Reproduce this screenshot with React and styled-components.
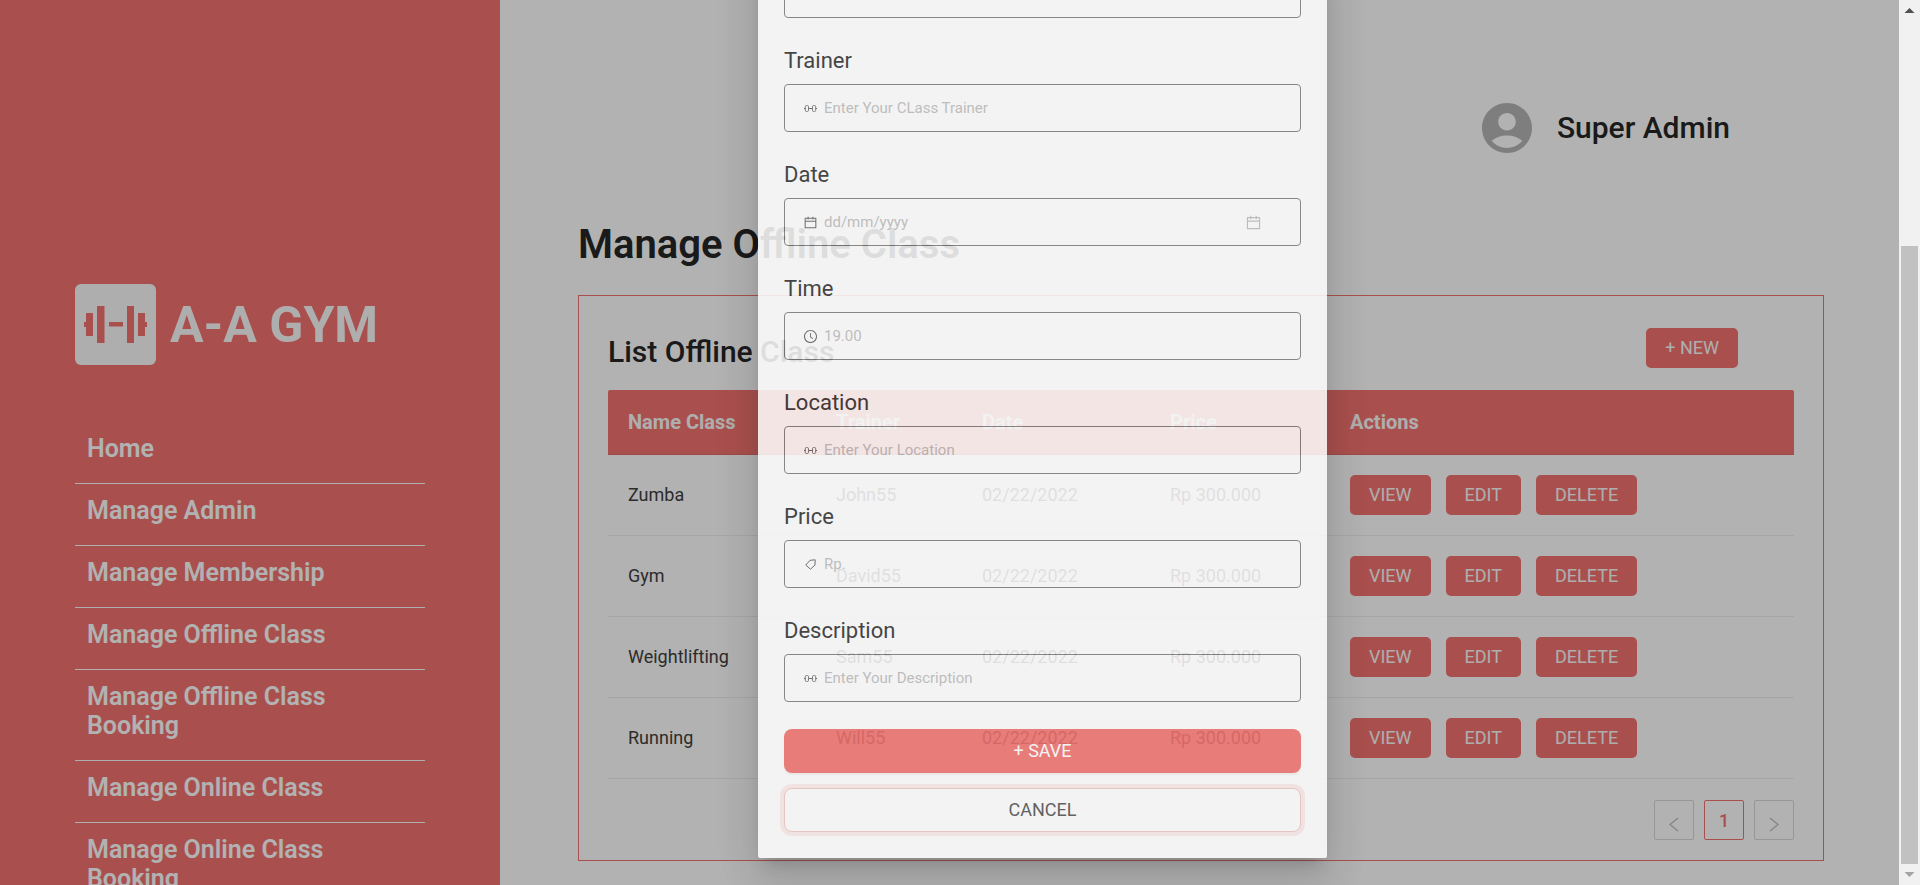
import React from "react";
import styled, { createGlobalStyle } from "styled-components";
import { MdAccountCircle } from "react-icons/md";
import { AiOutlineCalendar, AiOutlineClockCircle } from "react-icons/ai";

const red = "#f27370";

const GlobalStyle = createGlobalStyle`
  *, *::before, *::after { box-sizing: border-box; }
  body { margin: 0; background: #fff; color: #262626; font-family: Roboto, "Liberation Sans", sans-serif; }
  h1, h2, p, ul { margin: 0; padding: 0; }
  button, input { font-family: inherit; }
`;

const Screen = styled.div`
  display: flex;
  height: 100vh;
  overflow: hidden;
`;

const Page = styled.div`
  position: relative;
  display: flex;
  flex: 1;
  min-width: 0;
  overflow: hidden;
`;

const Sidebar = styled.aside`
  flex: 0 0 500px;
  padding: 284px 75px 0;
  background: ${red};
  color: #fff;
`;

const Brand = styled.div`
  display: flex;
  align-items: center;
  gap: 14px;
  margin-bottom: 57px;
  color: #fafafa;
  font-size: 50px;
  font-weight: 700;
  line-height: 58px;
`;

const BrandIcon = styled.svg`
  width: 81px;
  height: 81px;
  border-radius: 6px;
  background: #fafafa;
  fill: ${red};
`;

const NavList = styled.ul`
  list-style: none;
`;

const NavItem = styled.li`
  border-bottom: 1px solid #fafafa;
`;

const NavLink = styled.a`
  display: block;
  padding: 12px 12px 20px;
  color: #fff;
  font-size: 25px;
  font-weight: 600;
  line-height: 29px;
  text-decoration: none;
`;

const Main = styled.main`
  flex: 1;
  min-width: 0;
  padding: 98px 75px 0 78px;
`;

const UserBar = styled.header`
  display: flex;
  align-items: center;
  justify-content: flex-end;
  gap: 20px;
  margin-bottom: 63px;
  padding-right: 94px;
  font-size: 30px;
  font-weight: 500;
  line-height: 36px;

  svg { color: #b5b5b5; }
`;

const PageTitle = styled.h1`
  margin-bottom: 26px;
  font-size: 40px;
  font-weight: 600;
  line-height: 48px;
`;

const Card = styled.section`
  padding: 32px 29px 20px;
  border: 1px solid ${red};
`;

const CardHead = styled.div`
  display: flex;
  align-items: flex-end;
  justify-content: space-between;
  margin-bottom: 22px;
  padding-right: 56px;
`;

const CardTitle = styled.h2`
  font-size: 30px;
  font-weight: 500;
  line-height: 32px;
`;

const Button = styled.button`
  height: 40px;
  padding: 0 19px;
  border: 0;
  border-radius: 5px;
  background: ${red};
  color: #fafafa;
  font-size: 18px;
  line-height: 24px;
`;

const Table = styled.table`
  width: 100%;
  table-layout: fixed;
  border-collapse: separate;
  border-spacing: 0;
  font-size: 18px;
  line-height: 24px;
`;

const Col = styled.col`
  width: ${(p) => p.$width};
`;

const HeadCell = styled.th`
  height: 65px;
  padding: 0 20px;
  border-bottom: 1px solid #e46a67;
  background: ${red};
  color: #fafafa;
  font-size: 20px;
  font-weight: 700;
  text-align: left;

  &:first-child { border-top-left-radius: 2px; }
  &:last-child { border-top-right-radius: 2px; }
`;

const Cell = styled.td`
  height: 81px;
  padding: 0 20px;
  border-bottom: 1px solid #eee;
  color: #404040;
`;

const Actions = styled.div`
  display: flex;
  gap: 15px;
`;

const Pagination = styled.nav`
  display: flex;
  justify-content: flex-end;
  gap: 10px;
  margin-top: 21px;
`;

const PageButton = styled.button`
  display: flex;
  align-items: center;
  justify-content: center;
  width: 40px;
  height: 40px;
  padding: ${(p) => (p.$current ? "0" : "8px 0 0")};
  border: 1px solid ${(p) => (p.$current ? red : "#d9d9d9")};
  border-radius: 2px;
  background: transparent;
  color: ${(p) => (p.$current ? red : "#bfbfbf")};
  font-size: 18px;
  font-weight: 500;
`;

const Mask = styled.div`
  position: absolute;
  inset: 0;
  display: grid;
  grid-template-columns: 758fr 569fr 572fr;
  grid-template-rows: minmax(0, 1fr);
  align-items: end;
  padding-bottom: 27px;
  background: rgba(0, 0, 0, 0.3);
`;

const Modal = styled.div`
  grid-column: 2;
  padding: 26px;
  border-radius: 2px;
  background: #fff;
  opacity: 0.85;
  box-shadow:
    0 11px 15px -7px rgba(0, 0, 0, 0.2),
    0 24px 38px 3px rgba(0, 0, 0, 0.1),
    0 9px 46px 8px rgba(0, 0, 0, 0.06);
`;

const Form = styled.form`
  display: flex;
  flex-direction: column;
`;

const Field = styled.div`
  display: flex;
  flex-direction: column;
  gap: 10px;
  margin-bottom: ${(p) => (p.$last ? "27px" : "30px")};
`;

const Label = styled.label`
  font-size: 22px;
  line-height: 26px;
  color: #333;
`;

const InputBox = styled.div`
  display: flex;
  align-items: center;
  gap: 6px;
  height: 48px;
  padding: 0 38px 0 18px;
  border: 1px solid #808080;
  border-radius: 4px;
  color: #666;
`;

const Input = styled.input`
  flex: 1;
  min-width: 0;
  padding: 0;
  border: 0;
  outline: 0;
  background: transparent;
  font-size: 15px;
  line-height: 24px;

  &::placeholder { color: #bfbfbf; opacity: 1; }
`;

const SuffixIcon = styled.span`
  display: flex;
  color: #bfbfbf;
`;

const SaveButton = styled(Button)`
  height: 44px;
  border-radius: 8px;
  color: #fff;
  box-shadow: 0 2px 2px rgba(0, 0, 0, 0.06);
`;

const CancelButton = styled(SaveButton)`
  margin-top: 15px;
  border: 1px solid #f0c8c7;
  background: #fff;
  color: #555;
  box-shadow: 0 0 0 4px rgba(242, 115, 112, 0.14);
`;

const ScrollTrack = styled.div`
  display: flex;
  flex: 0 0 21px;
  flex-direction: column;
  align-items: center;
  background: #f1f1f1;
`;

const ScrollArrow = styled.svg`
  flex: none;
  width: 21px;
  height: 21px;
  fill: ${(p) => p.$tone};
`;

const ScrollSpace = styled.div`
  flex: 225;
`;

const ScrollThumb = styled.div`
  flex: 618;
  width: 17px;
  background: #c1c1c1;
`;

const Dumbbell = () => (
  <svg width="15" height="15" viewBox="0 0 15 15" fill="none" stroke="currentColor" aria-hidden="true">
    <path d="M1 7.500h1.300M6 7.500h3M12.700 7.500H14" />
    <rect x="2.300" y="4.500" width="3.200" height="6" rx="1.200" strokeWidth="0.900" />
    <rect x="9.500" y="4.500" width="3.200" height="6" rx="1.200" strokeWidth="0.900" />
  </svg>
);

const Tag = () => (
  <svg width="15" height="15" viewBox="0 0 15 15" fill="none" stroke="currentColor" strokeLinejoin="round" aria-hidden="true">
    <path d="M7 3.300L12.200 2.800L12 8L7.500 12.200L2.800 8z" />
  </svg>
);

const Chevron = ({ d }) => (
  <svg width="10" height="15" viewBox="0 0 10 15" fill="none" stroke="currentColor" strokeWidth="1.300" aria-hidden="true">
    <path d={d} />
  </svg>
);

const links = [
  "Home",
  "Manage Admin",
  "Manage Membership",
  "Manage Offline Class",
  "Manage Offline Class Booking",
  "Manage Online Class",
  "Manage Online Class Booking",
];

const rows = [
  ["Zumba", "John55", "02/22/2022", "Rp 300.000"],
  ["Gym", "David55", "02/22/2022", "Rp 300.000"],
  ["Weightlifting", "Sam55", "02/22/2022", "Rp 300.000"],
  ["Running", "Will55", "02/22/2022", "Rp 300.000"],
];

const fields = [
  { id: "trainer", label: "Trainer", hint: "Enter Your CLass Trainer", icon: <Dumbbell /> },
  { id: "date", label: "Date", hint: "dd/mm/yyyy", icon: <AiOutlineCalendar size={15} />, picker: true },
  { id: "time", label: "Time", hint: "19.00", icon: <AiOutlineClockCircle size={15} /> },
  { id: "location", label: "Location", hint: "Enter Your Location", icon: <Dumbbell /> },
  { id: "price", label: "Price", hint: "Rp.", icon: <Tag /> },
  { id: "description", label: "Description", hint: "Enter Your Description", icon: <Dumbbell /> },
];

export default function App() {
  return (
    <Screen>
      <GlobalStyle />
      <Page>
        <Sidebar>
          <Brand>
            <BrandIcon viewBox="0 0 81 81" aria-hidden="true">
              <path d="M9 38h2v-9h7v23h-7v-9H9zM22 22h7.500v37H22zM34 38h14v4.500H34zM52 22h7v37h-7zM63 29h7v9h2v5h-2v9h-7z" />
            </BrandIcon>
            A-A GYM
          </Brand>
          <NavList>
            {links.map((name) => (
              <NavItem key={name}>
                <NavLink href="#">{name}</NavLink>
              </NavItem>
            ))}
          </NavList>
        </Sidebar>

        <Main>
          <UserBar>
            <MdAccountCircle size={60} />
            Super Admin
          </UserBar>
          <PageTitle>Manage Offline Class</PageTitle>
          <Card>
            <CardHead>
              <CardTitle>List Offline Class</CardTitle>
              <Button type="button">+ NEW</Button>
            </CardHead>
            <Table>
              <colgroup>
                <Col $width="208px" />
                <Col $width="146px" />
                <Col $width="188px" />
                <Col $width="180px" />
                <Col $width="auto" />
              </colgroup>
              <thead>
                <tr>
                  {["Name Class", "Trainer", "Date", "Price", "Actions"].map((name) => (
                    <HeadCell key={name} scope="col">{name}</HeadCell>
                  ))}
                </tr>
              </thead>
              <tbody>
                {rows.map((row) => (
                  <tr key={row[0]}>
                    {row.map((value) => (
                      <Cell key={value}>{value}</Cell>
                    ))}
                    <Cell>
                      <Actions>
                        <Button type="button">VIEW</Button>
                        <Button type="button">EDIT</Button>
                        <Button type="button">DELETE</Button>
                      </Actions>
                    </Cell>
                  </tr>
                ))}
              </tbody>
            </Table>
            <Pagination aria-label="Pages">
              <PageButton type="button" aria-label="Previous"><Chevron d="M9 1L1 7.500L9 14" /></PageButton>
              <PageButton type="button" $current>1</PageButton>
              <PageButton type="button" aria-label="Next"><Chevron d="M1 1L9 7.500L1 14" /></PageButton>
            </Pagination>
          </Card>
        </Main>

        <Mask>
          <Modal role="dialog" aria-label="New class">
            <Form>
              <Field>
                <InputBox>
                  <Input type="text" aria-label="Name Class" />
                </InputBox>
              </Field>
              {fields.map((f, i) => (
                <Field key={f.id} $last={i === fields.length - 1}>
                  <Label htmlFor={f.id}>{f.label}</Label>
                  <InputBox>
                    {f.icon}
                    <Input id={f.id} type="text" placeholder={f.hint} />
                    {f.picker && (
                      <SuffixIcon><AiOutlineCalendar size={17} /></SuffixIcon>
                    )}
                  </InputBox>
                </Field>
              ))}
              <SaveButton type="button">+ SAVE</SaveButton>
              <CancelButton type="button">CANCEL</CancelButton>
            </Form>
          </Modal>
        </Mask>
      </Page>

      <ScrollTrack aria-hidden="true">
        <ScrollArrow viewBox="0 0 21 21" $tone="#505050"><path d="M10.500 8l5 5h-10z" /></ScrollArrow>
        <ScrollSpace />
        <ScrollThumb />
        <ScrollArrow viewBox="0 0 21 21" $tone="#a3a3a3"><path d="M10.500 13l5-5h-10z" /></ScrollArrow>
      </ScrollTrack>
    </Screen>
  );
}
